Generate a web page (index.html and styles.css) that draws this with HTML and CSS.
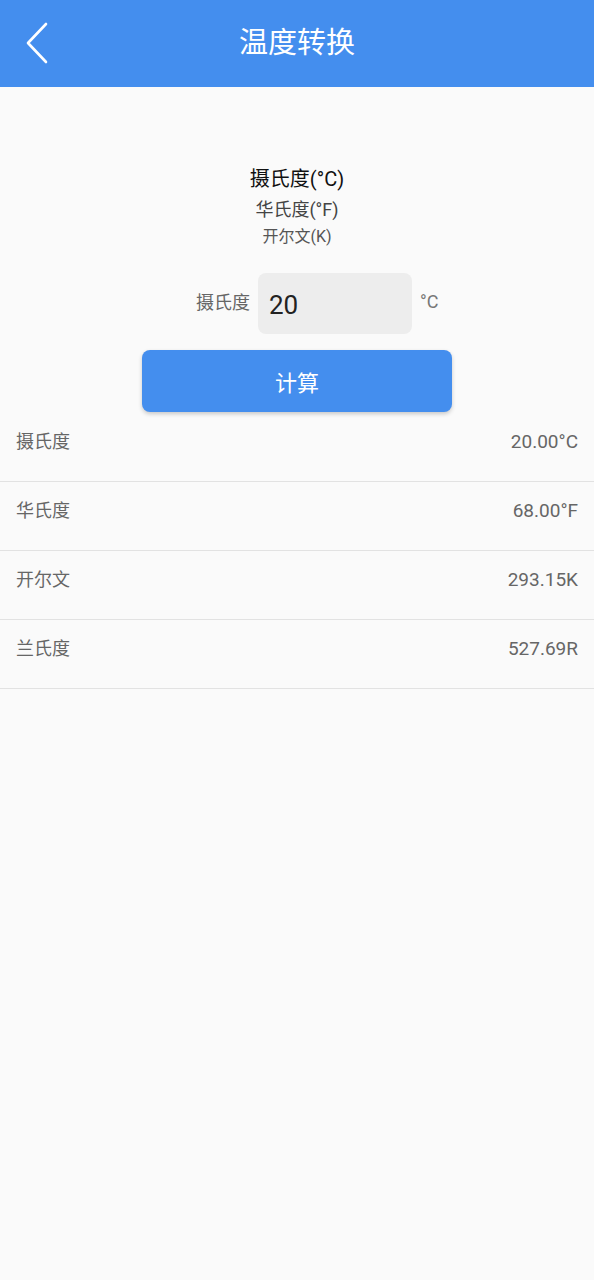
FILE: index.html
```html
<!DOCTYPE html>
<html lang="zh">
<head>
<meta charset="utf-8">
<link rel="stylesheet" href="styles.css">
</head>
<body>
<header class="bar">
  <svg class="back" width="24" height="42" viewBox="0 0 24 42"><polyline points="21,2 3,21 21,40" fill="none" stroke="#fff" stroke-width="2.6" stroke-linecap="round" stroke-linejoin="round"/></svg>
  <h1 class="title">温度转换</h1>
</header>
<main class="main">
  <div class="picker">
    <div class="pk pk1">摄氏度(°C)</div>
    <div class="pk pk2">华氏度(°F)</div>
    <div class="pk pk3">开尔文(K)</div>
  </div>
  <div class="inrow">
    <span class="inlabel">摄氏度</span>
    <div class="inbox">20</div>
    <span class="inunit">°C</span>
  </div>
  <div class="btnwrap"><button class="btn">计算</button></div>
  <ul class="list">
    <li class="row"><span class="lab">摄氏度</span><span class="val">20.00°C</span></li>
    <li class="row"><span class="lab">华氏度</span><span class="val">68.00°F</span></li>
    <li class="row"><span class="lab">开尔文</span><span class="val">293.15K</span></li>
    <li class="row"><span class="lab">兰氏度</span><span class="val">527.69R</span></li>
  </ul>
</main>
</body>
</html>
```
FILE: styles.css
```css
* { box-sizing: border-box; }
html, body { margin: 0; padding: 0; }
body {
  background: #fafafa;
  font-family: Roboto, "Noto Sans CJK SC", sans-serif;
  width: 594px;
  min-height: 1280px;
}
.bar {
  height: 87px;
  background: #448eee;
  display: flex;
  align-items: center;
  justify-content: center;
  position: relative;
}
.back { position: absolute; left: 25px; top: 22px; }
.title {
  margin: 0;
  color: #fff;
  font-weight: 400;
  font-size: 29px;
  line-height: 1;
}
.main { padding-top: 82px; }
.picker { display: flex; flex-direction: column; align-items: center; }
.pk { line-height: 1; }
.pk1 { font-size: 20px; color: #111; height: 20px; }
.pk2 { font-size: 18px; color: #444; margin-top: 12px; height: 18px; }
.pk3 { font-size: 16px; color: #555; margin-top: 10px; height: 16px; }
.inrow {
  margin-top: 28px;
  display: grid;
  grid-template-columns: 1fr 154px 1fr;
  column-gap: 8px;
  align-items: center;
  padding-left: 76px;
}
.inlabel { font-size: 18px; color: #666; justify-self: end; margin-top: -6px; }
.inbox {
  height: 61px;
  background: #ededed;
  border-radius: 8px;
  font-size: 26px;
  color: #222;
  display: flex;
  align-items: center;
  padding-left: 11px;
  padding-top: 2px;
}
.inunit { font-size: 18px; color: #777; margin-top: -4px; }
.btnwrap { display: flex; justify-content: center; margin-top: 16px; }
.btn {
  width: 310px;
  height: 62px;
  border: 0;
  border-radius: 8px;
  background: #448eee;
  color: #fff;
  font-family: inherit;
  font-size: 22px;
  box-shadow: 0 2px 4px rgba(0,0,0,0.2);
}
.list { list-style: none; margin: 1px 0 0; padding: 0; }
.row {
  display: flex;
  justify-content: space-between;
  height: 69px;
  padding: 19px 16px 0;
  border-bottom: 1px solid #e2e2e2;
  font-size: 18px;
  line-height: 20px;
  color: #666;
}
.val { font-size: 19px; }
```
